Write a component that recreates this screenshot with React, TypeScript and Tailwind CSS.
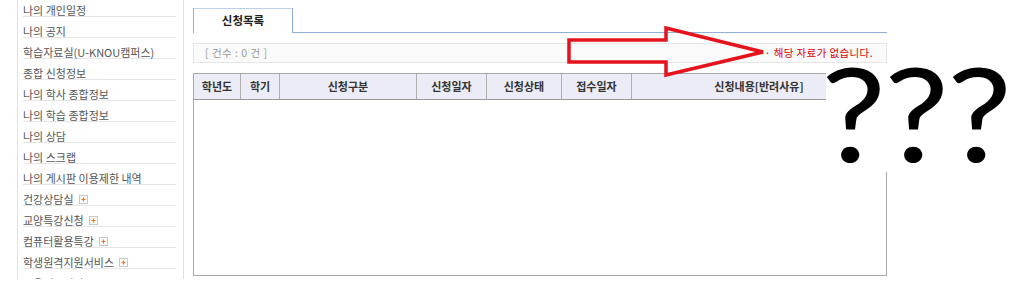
const menu = [
  { label: '나의 개인일정' },
  { label: '나의 공지' },
  { label: '학습자료실(U-KNOU캠퍼스)' },
  { label: '종합 신청정보' },
  { label: '나의 학사 종합정보' },
  { label: '나의 학습 종합정보' },
  { label: '나의 상담' },
  { label: '나의 스크랩' },
  { label: '나의 게시판 이용제한 내역' },
  { label: '건강상담실', more: true },
  { label: '교양특강신청', more: true },
  { label: '컴퓨터활용특강', more: true },
  { label: '학생원격지원서비스', more: true },
  { label: '교육정보서비스', more: true },
];

const columns = ['학년도', '학기', '신청구분', '신청일자', '신청상태', '접수일자', '신청내용[반려사유]'];

const PlusBox = () => (
  <svg width="9" height="9" viewBox="0 0 9 9" className="ml-[5px] shrink-0">
    <rect x="0.5" y="0.5" width="8" height="8" fill="#fafafa" stroke="#c8c8c8" />
    <path d="M2.5 4.5h4M4.5 2.5v4" stroke="#f07818" strokeWidth="1.2" />
  </svg>
);

const Sidebar = () => (
  <aside className="ml-[17px] w-[167px] h-[279px] border-x border-[#e2e2e2] overflow-hidden shrink-0">
    <ul className="-mt-[4px] pl-[5px] pr-[7px]">
      {menu.map((m) => (
        <li key={m.label} className="h-[21px] border-b border-[#e6e6e6] flex items-center pt-[8px] text-[11px] text-[#555] whitespace-nowrap">
          <span>{m.label}</span>
          {m.more && <PlusBox />}
        </li>
      ))}
    </ul>
  </aside>
);

const Arrow = () => (
  <svg className="absolute left-0 top-0 pointer-events-none" width="1024" height="302">
    <polygon
      points="569,40 666,40 666,28 763,52 666,75 666,62 569,62"
      fill="none"
      stroke="#e5131d"
      strokeWidth="3.5"
      strokeLinejoin="miter"
    />
  </svg>
);

export default function App() {
  return (
    <div className="relative w-[1024px] h-[302px] bg-white overflow-hidden flex items-start font-['Noto_Sans_CJK_KR',sans-serif]">
      <Sidebar />

      <main className="ml-[9px] w-[694px] pt-[8px] shrink-0">
        <div className="flex items-end h-[25px]">
          <div className="w-[100px] h-[25px] border-t border-x border-[#8fb0d8] border-t-[#bcd2ec] bg-white flex items-center justify-center text-[11.5px] font-bold text-[#222]">
            신청목록
          </div>
          <div className="flex-1 border-b border-[#8fb0d8]" />
        </div>

        <div className="mt-[10px] h-[20px] border border-[#e6e6e6] bg-[#fafafa] flex items-center justify-between pl-[11px] pr-[13px]">
          <span className="text-[10.5px] tracking-[0.5px] text-[#999]">[ 건수 : 0 건 ]</span>
          <span className="text-[10.5px] tracking-[0.4px] text-[#e00000]">· 해당 자료가 없습니다.</span>
        </div>

        <div className="mt-[10px] border border-[#a8a8a8]">
          <div className="grid grid-cols-[47px_39px_137px_70px_75px_70px_1fr] h-[26px] bg-[#ececf6] border-b border-[#999]">
            {columns.map((c, i) => (
              <div
                key={c}
                className={`flex items-center justify-center text-[11px] font-bold text-[#333] ${i < columns.length - 1 ? 'border-r border-[#b0b0b0]' : ''}`}
              >
                {c}
              </div>
            ))}
          </div>
          <div className="h-[175px] bg-white" />
        </div>
      </main>

      <Arrow />

      <div className="absolute left-[826px] top-[70px] w-[198px] h-[102px] bg-white flex items-start pl-[0px] font-['Lato',sans-serif] text-[130px] leading-none text-black">
        <span className="w-[63px] -ml-[5px] -mt-[23px] scale-x-[1.12] origin-left">?</span>
        <span className="w-[63px] -mt-[23px] scale-x-[1.12] origin-left">?</span>
        <span className="w-[63px] -mt-[23px] scale-x-[1.12] origin-left">?</span>
      </div>
    </div>
  );
}
